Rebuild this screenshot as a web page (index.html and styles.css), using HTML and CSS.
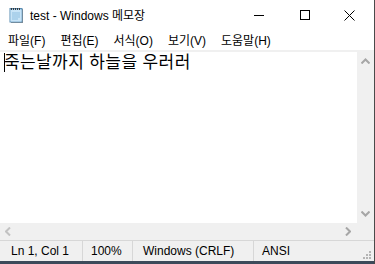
FILE: index.html
```html
<!DOCTYPE html>
<html lang="ko">
<head>
<meta charset="UTF-8">
<title>test - Windows 메모장</title>
<link rel="stylesheet" href="styles.css">
</head>
<body>
<div class="window">
    <div class="titlebar">
        <svg class="app-icon" width="16" height="16" viewBox="0 0 16 16">
            <rect x="3" y="2" width="12" height="14" fill="#8a8a8a"/>
            <rect x="2" y="1.5" width="12" height="13.5" fill="#a9d3f0" stroke="#5b8db3" stroke-width="1"/>
            <rect x="2.5" y="3" width="11" height="11.5" fill="#c8e4f7"/>
            <path d="M4 6h8M4 8h8M4 10h8M4 12h6" stroke="#8fbfe0" stroke-width="1"/>
            <path d="M3.5 1v2M5.5 1v2M7.5 1v2M9.5 1v2M11.5 1v2" stroke="#3a3a3a" stroke-width="1"/>
        </svg>
        <div class="title">test - Windows 메모장</div>
        <div class="controls">
            <div class="ctrl"><svg width="10" height="10" viewBox="0 0 10 10"><path d="M0 5.5h10" stroke="#000" stroke-width="1"/></svg></div>
            <div class="ctrl"><svg width="10" height="10" viewBox="0 0 10 10"><rect x="0.5" y="0.5" width="9" height="9" fill="none" stroke="#000" stroke-width="1"/></svg></div>
            <div class="ctrl ctrl-close"><svg width="11" height="11" viewBox="0 0 11 11"><path d="M0.5 0.5l10 10M10.5 0.5l-10 10" stroke="#000" stroke-width="1"/></svg></div>
        </div>
    </div>
    <ul class="menubar">
        <li>파일(<u>F</u>)</li>
        <li>편집(<u>E</u>)</li>
        <li>서식(<u>O</u>)</li>
        <li>보기(<u>V</u>)</li>
        <li>도움말(<u>H</u>)</li>
    </ul>
    <div class="editor">
        <div class="textarea">
            <div class="text"><span class="caret"></span>죽는날까지 하늘을 우러러</div>
        </div>
        <div class="vscroll">
            <svg width="9" height="6" viewBox="0 0 9 6"><path d="M0.5 5.5l4-4 4 4" fill="none" stroke="#a6a6a6" stroke-width="2"/></svg>
            <svg width="9" height="6" viewBox="0 0 9 6"><path d="M0.5 0.5l4 4 4-4" fill="none" stroke="#a6a6a6" stroke-width="2"/></svg>
        </div>
    </div>
    <div class="hrow">
        <div class="hscroll">
            <svg width="6" height="9" viewBox="0 0 6 9"><path d="M5 0.5l-4 4 4 4" fill="none" stroke="#c2c2c2" stroke-width="2"/></svg>
            <svg width="6" height="9" viewBox="0 0 6 9"><path d="M1 0.5l4 4-4 4" fill="none" stroke="#a6a6a6" stroke-width="2"/></svg>
        </div>
        <div class="corner"></div>
    </div>
    <div class="statusbar">
        <div class="cell cell-pos">Ln 1, Col 1</div>
        <div class="cell cell-zoom">100%</div>
        <div class="cell cell-eol">Windows (CRLF)</div>
        <div class="cell cell-enc">ANSI</div>
        <svg class="grip" width="9" height="9" viewBox="0 0 9 9" fill="#b4b4b4">
            <rect x="6" y="0" width="2" height="2"/>
            <rect x="3" y="3" width="2" height="2"/><rect x="6" y="3" width="2" height="2"/>
            <rect x="0" y="6" width="2" height="2"/><rect x="3" y="6" width="2" height="2"/><rect x="6" y="6" width="2" height="2"/>
        </svg>
    </div>
    <div class="desktop"></div>
</div>
</body>
</html>
```

FILE: styles.css
```css
body {
    margin: 0;
    padding: 0;
    background: #2b3a4a;
    font-family: "Liberation Sans", "Noto Sans CJK KR", sans-serif;
    font-size: 12px;
    color: #000;
}
.window {
    width: 374px;
    height: 264px;
    border-right: 1px solid #4a4a4a;
    display: flex;
    flex-direction: column;
    background: #fff;
}
.titlebar {
    height: 30px;
    display: flex;
    align-items: center;
    background: #fff;
}
.app-icon {
    margin-left: 8px;
    margin-top: -1px;
}
.title {
    margin-left: 6px;
    font-size: 12px;
    margin-top: -1px;
}
.controls {
    margin-left: auto;
    display: flex;
    height: 30px;
}
.ctrl {
    width: 46px;
    display: flex;
    align-items: center;
    justify-content: center;
}
.ctrl-close {
    padding-right: 4px;
    box-sizing: border-box;
}
.menubar {
    margin: 0;
    padding: 0 0 0 1px;
    list-style: none;
    height: 20px;
    display: flex;
    align-items: center;
    background: #fff;
}
.menubar li {
    padding: 0 6px 0 7px;
    margin-right: 2px;
    font-size: 12px;
}
.menubar u {
    text-decoration: none;
}
.editor {
    height: 172px;
    border-top: 2px solid #f0f0f0;
    display: flex;
}
.textarea {
    flex: 1;
    background: #fff;
}
.text {
    font-size: 17px;
    letter-spacing: 0.4px;
    line-height: 20px;
    padding: 1px 0 0 4px;
    color: #000;
    display: flex;
    align-items: center;
}
.caret {
    width: 1px;
    height: 19px;
    background: #000;
    margin-right: -1px;
}
.vscroll {
    width: 17px;
    background: #f0f0f0;
    display: flex;
    flex-direction: column;
    justify-content: space-between;
    align-items: center;
    padding: 6px 0 6px;
}
.hrow {
    height: 17px;
    display: flex;
    background: #f0f0f0;
}
.hscroll {
    flex: 1;
    display: flex;
    justify-content: space-between;
    align-items: center;
    padding: 0 6px 0 5px;
}
.corner {
    width: 17px;
}
.statusbar {
    height: 20px;
    border-top: 1px solid #d7d7d7;
    background: #f0f0f0;
    display: flex;
    align-items: center;
    position: relative;
}
.cell {
    height: 20px;
    line-height: 20px;
    font-size: 12px;
    padding-left: 10px;
    box-sizing: border-box;
}
.cell-pos {
    width: 83px;
    padding-left: 11px;
    border-right: 1px solid #d7d7d7;
}
.cell-zoom {
    width: 50px;
    padding-left: 8px;
    border-right: 1px solid #d7d7d7;
}
.cell-eol {
    width: 121px;
    border-right: 1px solid #d7d7d7;
}
.cell-enc {
    padding-left: 8px;
}
.grip {
    position: absolute;
    right: 2px;
    bottom: 1px;
}
.desktop {
    height: 3px;
    background: #3c4a5a;
}
```
